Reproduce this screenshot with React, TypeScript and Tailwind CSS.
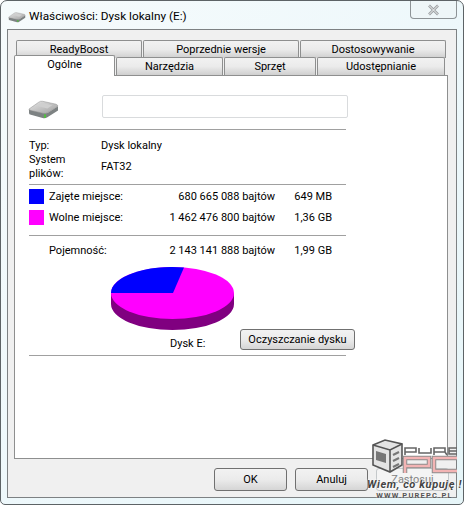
import React from "react";

function Hdd({ w, h, id }: { w: number; h: number; id: string }) {
  return (
    <svg width={w} height={h} viewBox="0 0 32 20" className="block">
      <defs>
        <linearGradient id={id} x1="0" y1="0" x2="1" y2="1">
          <stop offset="0" stopColor="#e6e6e6" />
          <stop offset="1" stopColor="#a0a0a0" />
        </linearGradient>
      </defs>
      <path d="M1 9 L1 13 Q1 14.5 3 15 L16 18.5 Q18 19 20 17.5 L31 10.5 L31 6 L20 13 L3 10 Z" fill="#7d8283" />
      <path d="M1 9 L11 2 Q13 0.5 15 1 L29 4 Q31.5 5 30.5 6.5 L20 13 Q18 14 16 13.5 L3 10.5 Q0.5 10 1 9 Z" fill={`url(#${id})`} stroke="#8a8a8a" strokeWidth="0.5" />
      <path d="M9 5.5 L14 2.8 L25 5 L20 8.5 Z" fill="#cfcfcf" />
      <rect x="16.5" y="14.5" width="2" height="3.5" fill="#4fc23a" />
    </svg>
  );
}

function Rule() {
  return <div className="h-px w-[317px] bg-[#a0a0a0]" />;
}

function BackTab({ label, w }: { label: string; w: string }) {
  return (
    <div
      className={`${w} flex h-[18px] items-center justify-center rounded-t-[2px] border border-b-0 border-[#8e8f8f] bg-gradient-to-b from-[#f2f2f2] via-[#ebebeb] to-[#cfcfcf] text-black`}
    >
      {label}
    </div>
  );
}

function Row({ swatch, label, bytes, size }: { swatch?: string; label: string; bytes: string; size: string }) {
  return (
    <div className="flex items-center">
      <div className={`h-[15px] w-[15px] ${swatch ?? ""}`} />
      <div className="ml-[5px] w-[80px] whitespace-nowrap">{label}</div>
      <div className="w-[146px] whitespace-nowrap text-right">{bytes}</div>
      <div className="w-[57px] whitespace-nowrap text-right">{size}</div>
    </div>
  );
}

function DlgButton({ label, disabled }: { label: string; disabled?: boolean }) {
  return (
    <div
      className={`flex h-[23px] w-[73px] items-center justify-center rounded-[3px] border ${
        disabled
          ? "border-[#c4c8ca] bg-[#f4f4f4] text-[#838383]"
          : "border-[#707070] bg-gradient-to-b from-[#f2f2f2] via-[#ebebeb] to-[#d5d5d5] text-black"
      }`}
    >
      {label}
    </div>
  );
}

export default function App() {
  return (
    <div
      className="relative flex h-[505px] w-[464px] flex-col overflow-hidden rounded-t-[7px] rounded-b-[5px] border border-[#5d6366] bg-gradient-to-br from-[#f6fbfc] via-[#eef8fb] to-[#e6f5f8] text-[11px] leading-[14px] text-black"
      style={{ fontFamily: 'Roboto, "Noto Sans", "Liberation Sans", sans-serif' }}
    >
      {/* title bar */}
      <div className="flex h-[28px] shrink-0 items-start">
        <div className="ml-[7px] mt-[11px]">
          <Hdd w={18} h={11} id="hddSmall" />
        </div>
        <div className="ml-[3px] mt-[7px] text-[11.8px] leading-[16px]">Właściwości: Dysk lokalny (E:)</div>
        <div className="ml-auto mr-[6px] flex h-[18px] w-[47px] items-center justify-center rounded-b-[4px] border border-t-0 border-[#8d9396] bg-[#eef6f8]">
          <svg width="13" height="12" viewBox="0 0 13 12">
            <path d="M2 1.5 L11 10.5 M11 1.5 L2 10.5" stroke="#9a9fa2" strokeWidth="2.6" fill="none" />
            <path d="M2 1.5 L11 10.5 M11 1.5 L2 10.5" stroke="#f4f4f4" strokeWidth="1" fill="none" />
          </svg>
        </div>
      </div>

      {/* client panel */}
      <div className="ml-[6px] mr-[6px] flex h-[469px] flex-col border border-[#7d8183] bg-[#f0f0f0] px-[6px] pt-[10px]">
        {/* tabs */}
        <div className="relative z-10 ml-[2px] flex h-[17px] gap-px">
          <BackTab label="ReadyBoost" w="w-[126px]" />
          <BackTab label="Poprzednie wersje" w="w-[156px]" />
          <BackTab label="Dostosowywanie" w="w-[146px]" />
        </div>
        <div className="relative z-20 flex h-[18px] items-end gap-px">
          <div className="relative z-30 mb-[-1px] flex h-[21px] w-[101px] items-start justify-center rounded-t-[2px] border border-b-0 border-[#8e8f8f] bg-white pt-[2px]">
            Ogólne
          </div>
          <BackTab label="Narzędzia" w="w-[107px]" />
          <BackTab label="Sprzęt" w="w-[92px]" />
          <BackTab label="Udostępnianie" w="w-[128px]" />
        </div>

        {/* white page */}
        <div className="relative flex h-[384px] w-[434px] flex-col border border-[#8e8f8f] bg-white pl-[14px]">
          <div className="flex h-[53px] items-start">
            <div className="ml-[-1px] mt-[24px]">
              <Hdd w={31} h={20} id="hddLarge" />
            </div>
            <div className="ml-[43px] mt-[19px] h-[23px] w-[246px] rounded-[2px] border border-[#d9dbdd] bg-white" />
          </div>
          <Rule />
          <div className="mt-[9px] flex h-[14px]">
            <div className="w-[72px]">Typ:</div>
            <div>Dysk lokalny</div>
          </div>
          <div className="flex h-[28px] items-center">
            <div className="w-[72px]">
              System
              <br />
              plików:
            </div>
            <div>FAT32</div>
          </div>
          <div className="mt-[3px]">
            <Rule />
          </div>
          <div className="mt-[4px]">
            <Row swatch="bg-[#0000ff]" label="Zajęte miejsce:" bytes="680 665 088 bajtów" size="649 MB" />
          </div>
          <div className="mt-[6px]">
            <Row swatch="bg-[#ff00ff]" label="Wolne miejsce:" bytes="1 462 476 800 bajtów" size="1,36 GB" />
          </div>
          <div className="mt-[10px]">
            <Rule />
          </div>
          <div className="mt-[7px]">
            <Row label="Pojemność:" bytes="2 143 141 888 bajtów" size="1,99 GB" />
          </div>
          <div className="ml-[81px] mt-[7px] h-[66px]">
            <svg width="125" height="66" viewBox="0 0 125 66" className="block">
              <path d="M1 28 L1 39 A61.5 26 0 0 0 124 39 L124 28 Z" fill="#800080" />
              <ellipse cx="62.5" cy="28" rx="61.5" ry="26" fill="#ff00ff" />
              <path d="M63 28 L1 28 A61.5 26 0 0 1 74 2.4 Z" fill="#0000ff" />
            </svg>
          </div>
          <div className="flex h-[24px] items-start">
            <div className="ml-[141px] mt-[6px] w-[39px] whitespace-nowrap">Dysk E:</div>
            <div className="ml-[31px] mt-[-2px] flex h-[21px] w-[115px] items-center justify-center rounded-[3px] border border-[#707070] bg-gradient-to-b from-[#f2f2f2] via-[#ebebeb] to-[#d5d5d5]">
              Oczyszczanie dysku
            </div>
          </div>
          <Rule />
        </div>

        {/* footer */}
        <div className="mt-[9px] flex justify-end gap-[8px] pr-[1px]">
          <DlgButton label="OK" />
          <DlgButton label="Anuluj" />
          <DlgButton label="Zastosuj" disabled />
        </div>
      </div>

      {/* watermark */}
      <div className="absolute right-0 top-[437px] flex w-[97px] flex-col items-center">
        <svg width="97" height="38" viewBox="0 0 97 38" className="block">
          <path d="M7 7 L19 2 L36 6 L36 27 L24 34 L7 27 Z" fill="#e4e4e4" stroke="#555" strokeWidth="1.6" />
          <path d="M7 7 L24 12 L36 6 M24 12 L24 34" fill="none" stroke="#555" strokeWidth="1.6" />
          <path d="M10 13 L20 16 L20 25 L10 22 Z" fill="#777" />
          <path d="M27 17 L33 14 M27 23 L33 20 M27 29 L33 26" stroke="#777" strokeWidth="2" />
          <path d="M39 17 V10 H50 V14 H39 M53 10 V15 H65 V10 M68 17 V10 H79 V14 H68 M79 14 L81 17 M91 10 H83 V16 H91 M83 13 H91" fill="none" stroke="#666" strokeWidth="1.6" />
          <path d="M39 35 V20 H63 V28 H39 M91 20 H68 V33 H91" fill="none" stroke="#8d8d8d" strokeWidth="4.5" />
          <path d="M39 35 V20 H63 V28 H39 M91 20 H68 V33 H91" fill="none" stroke="#f3b4b4" strokeWidth="2.5" />
        </svg>
        <div
          className="mt-[3px] whitespace-nowrap text-[11px] font-bold italic leading-[11px] tracking-[0.6px] text-[#444]"
          style={{ textShadow: "0 0 2px #fff, 0 0 2px #fff" }}
        >
          Wiem, co kupuję !
        </div>
        <div
          className="mt-[2px] whitespace-nowrap text-[7.5px] font-bold leading-[8px] tracking-[1.2px] text-[#555]"
          style={{ textShadow: "0 0 2px #fff" }}
        >
          WWW.PUREPC.PL
        </div>
      </div>
    </div>
  );
}
